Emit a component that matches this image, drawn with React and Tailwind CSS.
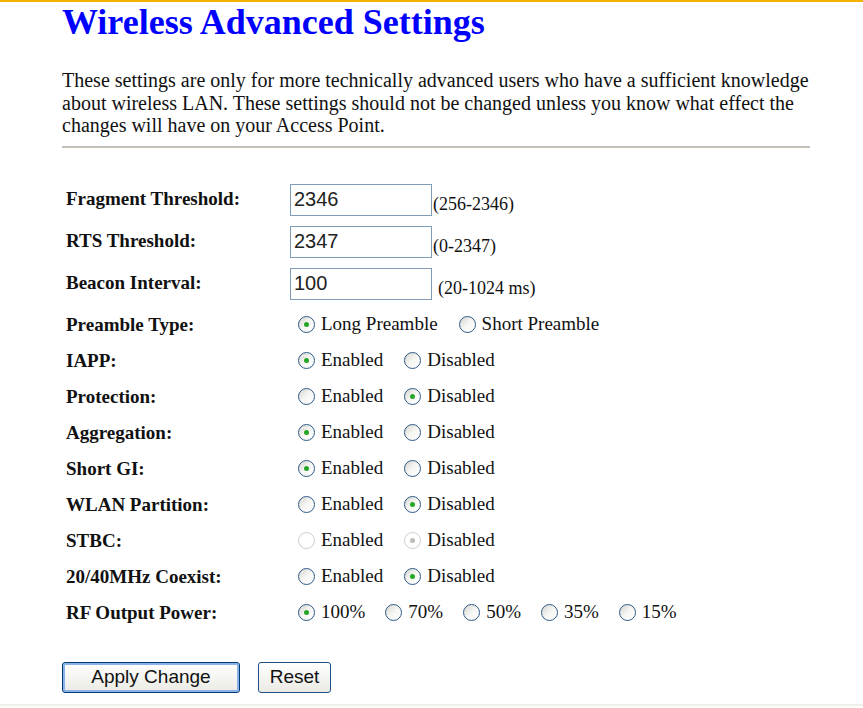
import { useState } from "react";

const serif = { fontFamily: '"Liberation Serif", "Times New Roman", serif' };
const sans = { fontFamily: '"Liberation Sans", Arial, sans-serif' };

function Radio({ checked, disabled, label, onClick }) {
  return (
    <span className="inline-flex items-center cursor-default" onClick={onClick}>
      <span
        className={`relative inline-block w-[17px] h-[17px] rounded-full border ${
          disabled
            ? "border-[#cfccc4] bg-white"
            : "border-[#2c5a8a] bg-gradient-to-br from-[#d6d5ce] via-[#f6f6f3] to-white"
        }`}
      >
        {checked && (
          <span
            className={`absolute left-[5px] top-[5px] w-[5px] h-[5px] rounded-full ${
              disabled ? "bg-[#bdbdb8]" : "bg-[#26a526]"
            }`}
          ></span>
        )}
      </span>
      <span className="ml-[6px]">{label}</span>
    </span>
  );
}

function RadioRow({ label, options, value, setValue, disabled, gap }) {
  return (
    <div className="flex items-center h-[36px]">
      <div className="w-[224px] font-bold">{label}</div>
      <div className="flex items-center">
        {options.map((o, i) => (
          <span key={o} className={i === 0 ? "ml-[8px]" : gap || "ml-[21px]"}>
            <Radio
              label={o}
              checked={value === i}
              disabled={disabled}
              onClick={() => !disabled && setValue(i)}
            />
          </span>
        ))}
      </div>
    </div>
  );
}

function InputRow({ label, value, range, rangeClass }) {
  return (
    <div className="flex items-center h-[42px]">
      <div className="w-[224px] font-bold">{label}</div>
      <input
        defaultValue={value}
        className="w-[142px] h-[32px] border border-[#7f9db9] px-[3px] text-[20px] text-[#222] outline-none"
        style={sans}
      />
      <span className={`text-[18px] self-end mb-[3px] ${rangeClass || "ml-[1px]"}`}>{range}</span>
    </div>
  );
}

export default function App() {
  const [vals, setVals] = useState({
    preamble: 0,
    iapp: 0,
    protection: 1,
    aggregation: 0,
    shortgi: 0,
    wlan: 1,
    stbc: 1,
    coexist: 1,
    power: 0,
  });
  const set = (k) => (v) => setVals({ ...vals, [k]: v });
  const ed = ["Enabled", "Disabled"];

  return (
    <div className="min-h-[708px] bg-white border-t-2 border-[#f5b301] text-[#111]" style={serif}>
      <div className="pl-[62px] pr-[53px]">
        <h1 className="text-[36px] font-bold text-[#0000ff] leading-[38px] pt-[1px]">
          Wireless Advanced Settings
        </h1>
        <p className="mt-[28px] text-[20px] leading-[22.5px] text-[#111]">
          These settings are only for more technically advanced users who have a sufficient knowledge
          about wireless LAN. These settings should not be changed unless you know what effect the
          changes will have on your Access Point.
        </p>
        <div className="mt-[9px] h-[2px] bg-[#c5c1b8]"></div>

        <div className="mt-[31px] pl-[4px] text-[19px]">
          <InputRow label="Fragment Threshold:" value="2346" range="(256-2346)" />
          <InputRow label="RTS Threshold:" value="2347" range="(0-2347)" />
          <InputRow label="Beacon Interval:" value="100" range="(20-1024 ms)" rangeClass="ml-[6px]" />
          <div className="mt-[3px]">
            <RadioRow
              label="Preamble Type:"
              options={["Long Preamble", "Short Preamble"]}
              value={vals.preamble}
              setValue={set("preamble")}
            />
            <RadioRow label="IAPP:" options={ed} value={vals.iapp} setValue={set("iapp")} />
            <RadioRow label="Protection:" options={ed} value={vals.protection} setValue={set("protection")} />
            <RadioRow label="Aggregation:" options={ed} value={vals.aggregation} setValue={set("aggregation")} />
            <RadioRow label="Short GI:" options={ed} value={vals.shortgi} setValue={set("shortgi")} />
            <RadioRow label="WLAN Partition:" options={ed} value={vals.wlan} setValue={set("wlan")} />
            <RadioRow label="STBC:" options={ed} value={vals.stbc} setValue={set("stbc")} disabled />
            <RadioRow label="20/40MHz Coexist:" options={ed} value={vals.coexist} setValue={set("coexist")} />
            <RadioRow
              label="RF Output Power:"
              options={["100%", "70%", "50%", "35%", "15%"]}
              value={vals.power}
              setValue={set("power")}
              gap="ml-[20px]"
            />
          </div>
        </div>

        <div className="flex gap-[18px] mt-[30px] text-[19px]" style={sans}>
          <button className="w-[178px] h-[31px] rounded-[3px] border border-[#003c74] shadow-[inset_0_0_0_2px_#8cb0e8] bg-gradient-to-b from-white to-[#ebeae4] text-[#111]">
            Apply Change
          </button>
          <button className="w-[73px] h-[31px] rounded-[3px] border border-[#1d4f80] bg-gradient-to-b from-white to-[#ebeae4] text-[#111]">
            Reset
          </button>
        </div>
      </div>
      <div className="mt-[11px] h-[2px] bg-[#f0efe8]"></div>
    </div>
  );
}
